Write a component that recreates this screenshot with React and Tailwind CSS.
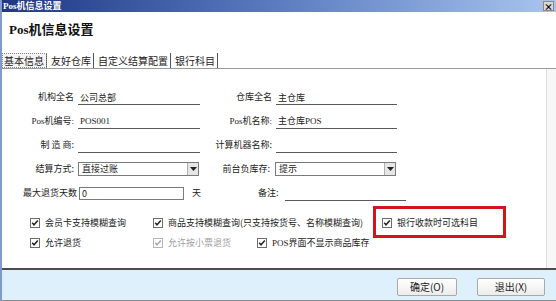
import React from "react";

const cjk = { fontFamily: '"Noto Sans CJK SC", "Liberation Sans", sans-serif' };
const serifCjk = { fontFamily: '"Liberation Serif", "Noto Sans CJK SC", serif' };

function Check({ disabled }) {
  const c = disabled ? "#a8a8a8" : "#222";
  return (
    <svg width="10" height="10" viewBox="0 0 10 10" className="shrink-0">
      <rect x="0.5" y="0.5" width="9" height="9" fill="#fff" stroke={disabled ? "#b5b5b5" : "#6d6d6d"} />
      <path d="M2.2 4.8 L4 6.8 L7.8 2.6" fill="none" stroke={c} strokeWidth="1.5" />
    </svg>
  );
}

function CheckItem({ label, disabled, className = "" }) {
  return (
    <div className={`flex items-center gap-[5px] ${className}`}>
      <Check disabled={disabled} />
      <span className={disabled ? "text-[#a0a0a0]" : "text-[#222]"}>{label}</span>
    </div>
  );
}

function Line({ value, w = "w-[122px]" }) {
  return (
    <div className={`${w} h-[15px] border-b border-[#5a5a5a] flex items-end pl-[2px] leading-[13px]`}>
      {value}
    </div>
  );
}

function Select({ value, w = "w-[121px]" }) {
  return (
    <div className={`${w} h-[14px] border border-[#7a7a7a] bg-white flex items-center`}>
      <span className="flex-1 pl-[3px] leading-[12px]">{value}</span>
      <div className="w-[11px] h-[12px] bg-[#e6e6e6] border-l border-[#b0b0b0] flex items-center justify-center">
        <svg width="7" height="4" viewBox="0 0 7 4">
          <path d="M0 0 H7 L3.5 4 Z" fill="#222" />
        </svg>
      </div>
    </div>
  );
}

function Row({ l1, f1, l2, f2 }) {
  return (
    <div className="flex items-center h-[24px]">
      <div className="w-[72px] text-right">{l1}</div>
      <div className="ml-[4px]">{f1}</div>
      <div className="w-[72px] text-right">{l2}</div>
      <div className="ml-[4px]">{f2}</div>
    </div>
  );
}

export default function App() {
  const tabs = ["基本信息", "友好仓库", "自定义结算配置", "银行科目"];
  return (
    <div className="w-[556px] h-[301px] bg-white flex flex-col overflow-hidden border-l-2 border-[#7f9cc9]" style={cjk}>
      {/* title bar */}
      <div className="h-[12px] flex items-center justify-between bg-gradient-to-r from-[#1f3784] via-[#5c7cc0] to-[#a9c5ee]">
        <span className="text-white text-[9px] font-bold leading-none pl-[1px]" style={serifCjk}>Pos机信息设置</span>
        <div className="w-[11px] h-[10px] mr-[2px] bg-[#d8d8d8] border border-[#8a8a8a] flex items-center justify-center text-[9px] font-bold leading-none text-black">
          ×
        </div>
      </div>

      {/* header */}
      <div className="h-[40px] flex items-start pl-[7px] pt-[9px]">
        <span className="text-[13px] font-bold text-[#111] leading-[18px]" style={serifCjk}>Pos机信息设置</span>
      </div>

      {/* tabs */}
      <div className="h-[17px] flex items-end border-b border-[#9a9a9a] text-[10px] leading-[14px] text-[#222]">
        {tabs.map((t, i) => (
          <div
            key={t}
            className={`h-[15px] px-[2px] flex items-center border-r border-[#555] ${
              i === 0 ? "outline-1 outline-dotted outline-[#888] -outline-offset-1 bg-[#f4f4f4]" : "bg-white ml-[2px]"
            }`}
          >
            {t}
          </div>
        ))}
      </div>

      {/* panel */}
      <div className="flex-1 flex text-[9px] text-[#222]">
        <div className="flex-1 pt-[16px] border-r border-[#dcdcdc]">
          <Row l1="机构全名" f1={<Line value="公司总部" />} l2="仓库全名" f2={<Line value="主仓库" w="w-[121px]" />} />
          <Row
            l1={<span style={serifCjk}>Pos机编号:</span>}
            f1={<Line value={<span style={serifCjk}>POS001</span>} />}
            l2={<span style={serifCjk}>Pos机名称:</span>}
            f2={<Line value={<span>主仓库<span style={serifCjk}>POS</span></span>} w="w-[121px]" />}
          />
          <Row l1="制 造 商:" f1={<Line value="" />} l2="计算机器名称:" f2={<Line value="" w="w-[121px]" />} />
          <Row l1="结算方式:" f1={<Select value="直接过账" w="w-[121px]" />} l2={<span className="pr-[1px]">前台负库存:</span>} f2={<Select value="提示" />} />
          <div className="flex items-center h-[24px]">
            <div className="w-[75px] text-right">最大退货天数</div>
            <div className="ml-[2px] w-[105px] h-[13px] border border-[#7a7a7a] bg-white pl-[2px] leading-[11px]">0</div>
            <div className="ml-[8px] w-[62px]">天</div>
            <div className="ml-[4px]">备注:</div>
            <div className="ml-[6px]">
              <Line value="" w="w-[121px]" />
            </div>
          </div>

          <div className="flex items-center h-[20px] mt-[8px] pl-[28px]">
            <CheckItem className="w-[123px]" label="会员卡支持模糊查询" />
            <CheckItem className="w-[229px]" label="商品支持模糊查询(只支持按货号、名称模糊查询)" />
            <div className="relative">
              <CheckItem label="银行收款时可选科目" />
              <div className="absolute -left-[9px] -top-[10px] w-[133px] h-[32px] border-[3px] border-[#d4141c]" />
            </div>
          </div>
          <div className="flex items-center h-[20px] pl-[28px]">
            <CheckItem className="w-[123px]" label="允许退货" />
            <CheckItem className="w-[104px]" label="允许按小票退货" disabled />
            <CheckItem label={<span><span style={serifCjk}>POS</span>界面不显示商品库存</span>} />
          </div>
        </div>
        <div className="w-[9px] bg-[#f7f7f7]" />
      </div>

      {/* footer */}
      <div className="h-[33px] border-t-2 border-[#4d4d4d] bg-[#ddf0fb] border-b border-b-[#8a8a8a] flex items-center justify-end gap-[20px] pr-[11px] text-[10px] text-[#222]">
        <div className="w-[60px] h-[18px] mt-[3px] border border-[#a9a9a9] rounded-[2px] bg-gradient-to-b from-white to-[#ececec] flex items-center justify-center">
          确定(O)
        </div>
        <div className="w-[68px] h-[18px] mt-[3px] border border-[#a9a9a9] rounded-[2px] bg-gradient-to-b from-white to-[#ececec] flex items-center justify-center">
          退出(X)
        </div>
      </div>
    </div>
  );
}
